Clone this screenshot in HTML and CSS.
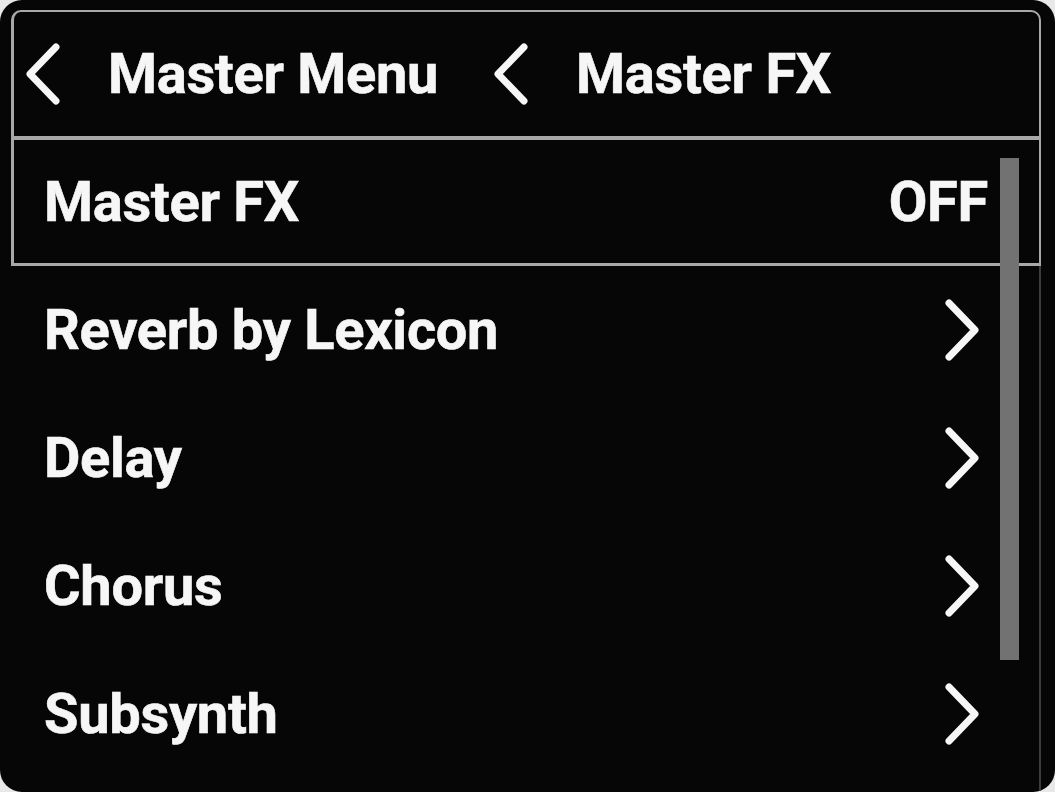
FILE: index.html
```html
<!DOCTYPE html>
<html lang="en">
<head>
    <meta charset="UTF-8">
    <meta name="viewport" content="width=device-width, initial-scale=1.0">
    <title>Master FX</title>
    <link rel="stylesheet" href="styles.css">
</head>
<body>

    <div class="screen">

        <!-- Breadcrumb header -->
        <div class="header">
            <svg class="back" width="36" height="62" viewBox="0 0 36 62">
                <polyline points="31,4 5,31 31,58" />
            </svg>
            <span class="crumb">Master Menu</span>
            <svg class="back" width="36" height="62" viewBox="0 0 36 62">
                <polyline points="31,4 5,31 31,58" />
            </svg>
            <span class="crumb">Master FX</span>
        </div>

        <!-- Menu list -->
        <div class="list">
            <div class="row selected">
                <span class="label">Master FX</span>
                <span class="value">OFF</span>
            </div>
            <div class="row">
                <span class="label">Reverb by Lexicon</span>
                <svg class="next" width="36" height="62" viewBox="0 0 36 62">
                    <polyline points="5,4 31,31 5,58" />
                </svg>
            </div>
            <div class="row">
                <span class="label">Delay</span>
                <svg class="next" width="36" height="62" viewBox="0 0 36 62">
                    <polyline points="5,4 31,31 5,58" />
                </svg>
            </div>
            <div class="row">
                <span class="label">Chorus</span>
                <svg class="next" width="36" height="62" viewBox="0 0 36 62">
                    <polyline points="5,4 31,31 5,58" />
                </svg>
            </div>
            <div class="row">
                <span class="label">Subsynth</span>
                <svg class="next" width="36" height="62" viewBox="0 0 36 62">
                    <polyline points="5,4 31,31 5,58" />
                </svg>
            </div>

            <div class="scrollbar"></div>
        </div>
    </div>

</body>
</html>
```

FILE: styles.css
```css
/* General Styling */
body {
    margin: 0;
    background-color: #e8e8e8;
    font-family: Roboto, "Liberation Sans", sans-serif;
    font-weight: bold;
    color: #f6f6f6;
}

.screen {
    width: 1055px;
    height: 792px;
    box-sizing: border-box;
    padding: 10px 14px 0 11px;
    background-color: #060606;
    border-radius: 22px;
    overflow: hidden;
}

/* Header */
.header {
    display: flex;
    align-items: center;
    height: 130px;
    box-sizing: border-box;
    padding-left: 11px;
    border: 2px solid #a8a8a8;
    border-left-width: 3px;
    border-bottom-width: 4px;
    border-radius: 10px 10px 0 0;
}

.crumb {
    font-size: 56px;
    margin-left: 47px;
    margin-right: 55px;
    letter-spacing: -0.3px;
    -webkit-text-stroke: 0.6px #f6f6f6;
}

svg polyline {
    fill: none;
    stroke: #f6f6f6;
    stroke-width: 7;
    stroke-linecap: round;
    stroke-linejoin: round;
}

/* List */
.list {
    position: relative;
    height: 652px;
    border-right: 2px solid #3c3c3c;
}

.row {
    display: flex;
    align-items: center;
    justify-content: space-between;
    height: 128px;
    box-sizing: border-box;
    padding: 0 59px 0 33px;
}

.row.selected {
    height: 126px;
    padding-right: 51px;
    padding-left: 30px;
    border-left: 3px solid #a8a8a8;
    border-right: 2px solid #a8a8a8;
    border-bottom: 3px solid #a8a8a8;
    margin-right: -2px;
}

.label,
.value {
    font-size: 56px;
    letter-spacing: -0.3px;
    -webkit-text-stroke: 0.6px #f6f6f6;
}

.scrollbar {
    position: absolute;
    left: 989px;
    top: 18px;
    width: 19px;
    height: 502px;
    background-color: #727272;
}
```
